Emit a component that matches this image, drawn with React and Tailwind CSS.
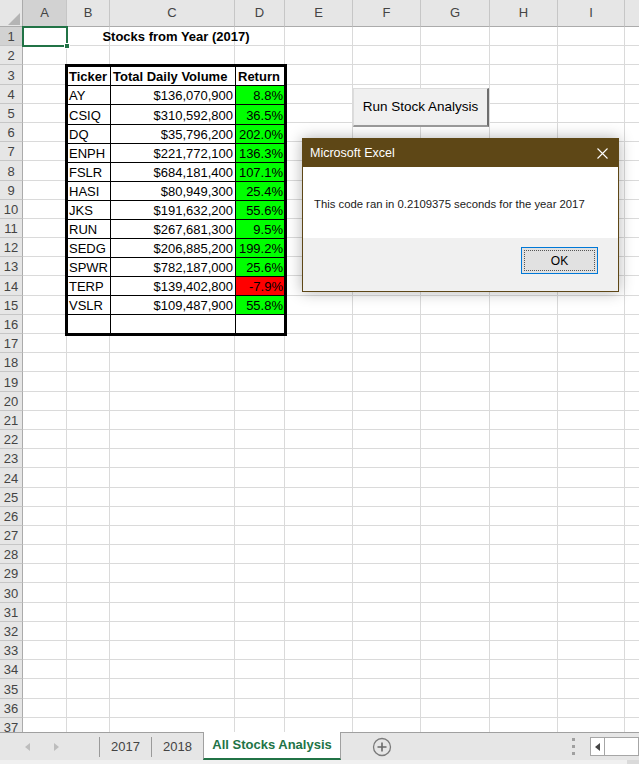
import { Fragment } from 'react';

const COLS = ['A', 'B', 'C', 'D', 'E', 'F', 'G', 'H', 'I', 'J'];
const ROWS = Array.from({ length: 37 }, (_, i) => i + 1);

// ticker, volume, return, positive?
const STOCKS = [
  ['AY', '$136,070,900', '8.8%', true],
  ['CSIQ', '$310,592,800', '36.5%', true],
  ['DQ', '$35,796,200', '202.0%', true],
  ['ENPH', '$221,772,100', '136.3%', true],
  ['FSLR', '$684,181,400', '107.1%', true],
  ['HASI', '$80,949,300', '25.4%', true],
  ['JKS', '$191,632,200', '55.6%', true],
  ['RUN', '$267,681,300', '9.5%', true],
  ['SEDG', '$206,885,200', '199.2%', true],
  ['SPWR', '$782,187,000', '25.6%', true],
  ['TERP', '$139,402,800', '-7.9%', false],
  ['VSLR', '$109,487,900', '55.8%', true],
];

const gridCls =
  'grid grid-cols-[23px_44px_43px_125px_50px_68px_68px_69px_68px_67px_80px] grid-rows-[27px_repeat(37,19.2px)] col-start-1 row-start-1';

function GridLines() {
  return (
    <div className={gridCls}>
      <div className="bg-[#e6e6e6] border-r border-b border-[#ababab] relative">
        <svg width="23" height="27" className="block">
          <polygon points="20,13 20,25 8,25" fill="#b4b4b4" />
        </svg>
      </div>
      {COLS.map((c) => (
        <div
          key={c}
          className={`${c === 'A' ? 'bg-[#d2d2d2]' : 'bg-[#e6e6e6]'} border-r border-r-[#c6c6c6] border-b border-b-[#ababab] flex items-center justify-center text-[13px] text-[#444]`}
        >
          {c === 'J' ? '' : c}
        </div>
      ))}
      {ROWS.map((r) => (
        <Fragment key={r}>
          <div
            className={`${r === 1 ? 'bg-[#d2d2d2]' : 'bg-[#e6e6e6]'} border-r border-r-[#ababab] border-b border-b-[#c6c6c6] flex items-end justify-center text-[13px] leading-[16px] text-[#444]`}
          >
            {r}
          </div>
          {COLS.map((c) => (
            <div key={c} className="bg-white border-r border-b border-[#dadada]" />
          ))}
        </Fragment>
      ))}
    </div>
  );
}

function StockTable() {
  return (
    <div className="col-start-3 col-end-6 row-start-4 row-end-18 -ml-[2px] -mr-[2px] -mt-[1px] -mb-[2px] border-[3px] border-black bg-white flex flex-col text-[13px] leading-[16px] text-black">
      <div className="flex-1 min-h-0 flex border-b border-black font-bold">
        <div className="w-[43px] border-r border-black flex items-end pl-[1px]">Ticker</div>
        <div className="w-[125px] border-r border-black flex items-end pl-[2px]">Total Daily Volume</div>
        <div className="flex-1 flex items-end pl-[2px]">Return</div>
      </div>
      {STOCKS.map(([t, v, ret, up]) => (
        <div key={t} className="flex-1 min-h-0 flex border-b border-black">
          <div className="w-[43px] border-r border-black flex items-end pl-[1px]">{t}</div>
          <div className="w-[125px] border-r border-black flex items-end justify-end pr-[2px]">{v}</div>
          <div
            className={`flex-1 flex items-end justify-end pr-[1px] ${up ? 'bg-[#00ff00]' : 'bg-[#ff0000]'}`}
          >
            {ret}
          </div>
        </div>
      ))}
      <div className="flex-1 min-h-0 flex">
        <div className="w-[43px] border-r border-black" />
        <div className="w-[125px] border-r border-black" />
        <div className="flex-1" />
      </div>
    </div>
  );
}

function SheetContent() {
  return (
    <div className={gridCls}>
      <div className="col-start-3 col-end-6 row-start-2 flex items-end justify-center pb-[1px] font-bold text-[13px] leading-[16px] text-black">
        Stocks from Year (2017)
      </div>
      <div className="col-start-2 row-start-2 -m-[1px] border-2 border-[#217346] relative">
        <div className="absolute -right-[4px] -bottom-[4px] w-[6px] h-[6px] bg-[#217346] border border-white" />
      </div>
      <StockTable />
    </div>
  );
}

function MessageBox() {
  return (
    <div className="absolute left-[302px] top-[138px] w-[317px] h-[154px] border border-[#5e4716] bg-white flex flex-col shadow-[0_0_14px_rgba(0,0,0,0.3)]">
      <div className="h-[28px] bg-[#5e4716] flex items-center justify-between pl-[7px] pr-[10px] text-white text-[12.5px]">
        <span>Microsoft Excel</span>
        <svg width="11" height="11" viewBox="0 0 11 11">
          <path d="M0.5 0.5 L10.5 10.5 M10.5 0.5 L0.5 10.5" stroke="#fff" strokeWidth="1.1" />
        </svg>
      </div>
      <div className="h-[71px] flex items-center pl-[11px] pt-[3px] text-[11.3px] text-[#1a1a1a]">
        This code ran in 0.2109375 seconds for the year 2017
      </div>
      <div className="flex-1 bg-[#f0f0f0] flex items-start justify-end pt-[9px] pr-[20px]">
        <button className="w-[77px] h-[27px] bg-[#e1e1e1] border border-[#0078d7] p-[2px]">
          <div className="w-full h-full border border-dotted border-[#555] flex items-center justify-center text-[12px] text-black">
            OK
          </div>
        </button>
      </div>
    </div>
  );
}

function TabBar() {
  return (
    <div className="flex flex-col">
      <div className="h-[28px] flex bg-[#e6e6e6] text-[13px]">
        <div className="w-[203px] flex items-center border-t border-[#a0a0a0]">
          <div className="w-[99px] flex items-center">
            <svg width="99" height="16" viewBox="0 0 99 16">
              <polygon points="30,4 30,12 25,8" fill="#bdbdbd" />
              <polygon points="54,4 54,12 59,8" fill="#bdbdbd" />
            </svg>
          </div>
          <div className="w-px h-[20px] bg-[#9a9a9a]" />
          <div className="w-[51px] text-center text-[#444]">2017</div>
          <div className="w-px h-[20px] bg-[#9a9a9a]" />
          <div className="flex-1 text-center text-[#444]">2018</div>
        </div>
        <div className="w-[138px] bg-white border-l border-r border-[#a0a0a0] border-b-2 border-b-[#217346] flex items-center justify-center font-bold text-[#217346]">
          All Stocks Analysis
        </div>
        <div className="flex-1 flex items-center border-t border-[#a0a0a0]">
          <div className="w-[82px] flex justify-center">
            <svg width="20" height="20" viewBox="0 0 20 20">
              <circle cx="10" cy="10" r="8.5" fill="none" stroke="#7a7a7a" strokeWidth="1.3" />
              <path d="M10 5.5 V14.5 M5.5 10 H14.5" stroke="#6a6a6a" strokeWidth="1.6" />
            </svg>
          </div>
          <div className="flex-1" />
          <div className="w-[16px] flex flex-col items-center gap-[4px]">
            <div className="w-[3px] h-[3px] bg-[#a0a0a0]" />
            <div className="w-[3px] h-[3px] bg-[#a0a0a0]" />
            <div className="w-[3px] h-[3px] bg-[#a0a0a0]" />
          </div>
          <div className="w-[9px]" />
          <div className="w-[15px] h-[19px] bg-white border border-[#a6a6a6] flex items-center justify-center">
            <svg width="6" height="8" viewBox="0 0 6 8">
              <polygon points="5,0 5,8 0,4" fill="#444" />
            </svg>
          </div>
          <div className="w-[34px] h-[19px] bg-white border border-l-0 border-[#a6a6a6]" />
        </div>
      </div>
      <div className="h-[4px] bg-[#f0f0f0] flex justify-end">
        <div className="w-[12px] h-full bg-[#dadada]" />
      </div>
    </div>
  );
}

export default function App() {
  return (
    <div className="w-[639px] h-[764px] overflow-hidden bg-white font-['Liberation_Sans',Arial,sans-serif]">
      <div className="grid h-[732px] overflow-hidden relative">
        <GridLines />
        <SheetContent />
        <button className="absolute left-[353px] top-[88px] w-[136px] h-[39px] bg-[#f0f0f0] border-t border-l border-[#dcdcdc] border-r-2 border-b-2 border-r-[#6e6e6e] border-b-[#9a9a9a] text-[13.5px] text-black">
          Run Stock Analysis
        </button>
        <MessageBox />
      </div>
      <TabBar />
    </div>
  );
}
